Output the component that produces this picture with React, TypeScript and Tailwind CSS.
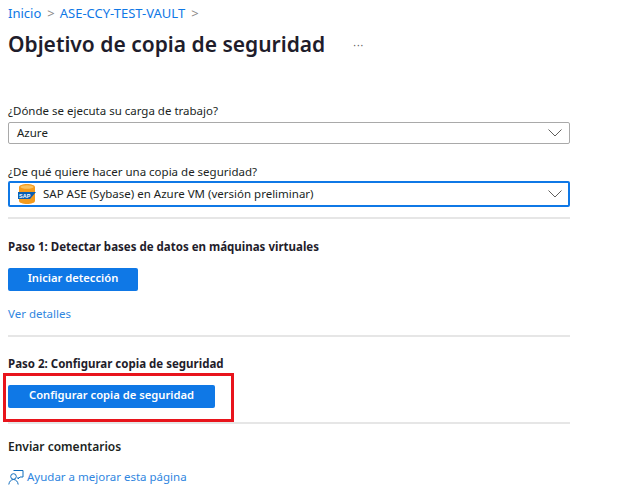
function Chevron() {
  return (
    <svg width="14" height="8" viewBox="0 0 14 8" fill="none" stroke="#605e5c" strokeWidth="1" className="shrink-0">
      <path d="M0.500 0.500 7 7l6.500-6.500" />
    </svg>
  );
}

function SapIcon() {
  return (
    <svg width="18" height="20" viewBox="0 0 18 20" className="shrink-0">
      <path d="M1 3c0-1.600 3.600-3 8-3s8 1.400 8 3v14c0 1.600-3.600 3-8 3s-8-1.400-8-3z" fill="#f59b1c" />
      <ellipse cx="9" cy="3" rx="6.500" ry="1.800" fill="#fbc25e" />
      <path d="M0 8h18l-6 7H0z" fill="#0a5fb4" />
      <text x="1" y="13.500" fontSize="5.500" fontWeight="700" fill="#fff" fontFamily="'Liberation Sans', sans-serif">SAP</text>
    </svg>
  );
}

function FeedbackIcon() {
  return (
    <svg width="16" height="16" viewBox="0 0 16 16" fill="none" stroke="#0f6cbd" strokeWidth="1" className="shrink-0">
      <path d="M5.500 1.500h9.500v6.500h-3l-2 2v-2" />
      <circle cx="5.500" cy="7.500" r="2.800" fill="#fff" />
      <path d="M0.800 15.500c0.400-3 2.300-5 4.700-5s4.300 2 4.700 5" />
    </svg>
  );
}

export default function App() {
  return (
    <div className="h-[494px] w-[631px] overflow-hidden bg-white pl-2 pr-[61px] font-['Noto_Sans',sans-serif] text-[11.5px] text-[#201f1e]">
      <nav className="flex h-[26px] items-center pt-0.5 text-[13px] text-[#0f78e6]">
        <span>Inicio</span>
        <span className="mr-[5px] ml-[6px] text-[#8a8886]">&gt;</span>
        <span>ASE-CCY-TEST-VAULT</span>
        <span className="ml-[6px] text-[#8a8886]">&gt;</span>
      </nav>
      <header className="flex h-[38px] items-center">
        <h1 className="text-[21px] font-semibold text-[#1f1d2b]">Objetivo de copia de seguridad</h1>
        <span className="ml-[28px] text-[10px] tracking-[1px] text-[#605e5c]">···</span>
      </header>

      <p className="mt-[38px] leading-[17px]">¿Dónde se ejecuta su carga de trabajo?</p>
      <div className="mt-[3px] flex h-[22px] items-center justify-between rounded-[2px] border border-[#a9a9a9] pl-2 pr-[7px]">
        <span>Azure</span>
        <Chevron />
      </div>

      <p className="mt-[19px] leading-[17px]">¿De qué quiere hacer una copia de seguridad?</p>
      <div className="mt-[1px] flex h-[26px] items-center justify-between rounded-[2px] border-2 border-[#0f78e6] pl-2 pr-[6px]">
        <span className="flex items-center gap-[7px]">
          <SapIcon />
          <span>SAP ASE (Sybase) en Azure VM (versión preliminar)</span>
        </span>
        <Chevron />
      </div>
      <hr className="mt-[10px] border-t-2 border-[#e6e6e6]" />

      <h2 className="mt-[19px] leading-[17px] font-bold text-[#1f1d2b]">Paso 1: Detectar bases de datos en máquinas virtuales</h2>
      <button type="button" className="mt-[13px] block h-[23px] w-[130px] rounded-[2px] bg-[#0f78e6] pb-0.5 text-[11.200px] font-semibold text-white">
        Iniciar detección
      </button>
      <a className="mt-[14px] block leading-[17px] text-[#2f86e0]">Ver detalles</a>
      <hr className="mt-[13px] border-t-2 border-[#e6e6e6]" />

      <h2 className="mt-[18px] leading-[17px] font-bold text-[#1f1d2b]">Paso 2: Configurar copia de seguridad</h2>
      <div className="relative mt-[13px]">
        <button type="button" className="block h-[23px] w-[207px] rounded-[2px] bg-[#0f78e6] pb-0.5 text-[11.200px] font-semibold text-white">
          Configurar copia de seguridad
        </button>
        <div className="absolute top-[-12px] left-[-5px] h-[49px] w-[231px] border-[3px] border-[#e8141c]" />
      </div>
      <hr className="mt-[14px] border-t-2 border-[#e6e6e6]" />

      <h2 className="mt-[14px] text-[12px] leading-[18px] font-semibold">Enviar comentarios</h2>
      <a className="mt-[12px] flex items-center gap-[3px] text-[#2f86e0]">
        <FeedbackIcon />
        <span>Ayudar a mejorar esta página</span>
      </a>
    </div>
  );
}
